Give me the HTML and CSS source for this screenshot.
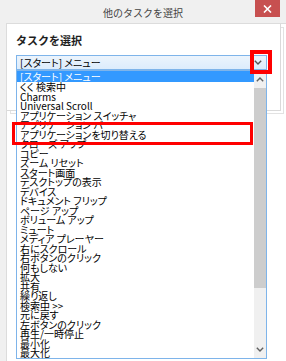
FILE: index.html
```
<!DOCTYPE html>
<html lang="ja">
<head>
    <meta charset="UTF-8">
    <title>他のタスクを選択</title>
    <link rel="stylesheet" href="styles.css">
</head>
<body>

<div class="dialog">
    <!-- Title bar -->
    <div class="titlebar">
        <span></span>
        <span class="title">他のタスクを選択</span>
        <button class="close-btn" aria-label="閉じる">
            <svg width="9" height="8" viewBox="0 0 9 8"><path d="M1 0.5 L8 7.5 M8 0.5 L1 7.5" stroke="#fff" stroke-width="1.6"/></svg>
        </button>
    </div>

    <div class="content">
        <!-- Main panel -->
        <div class="panel">
            <h1>タスクを選択</h1>
            <div class="select-box">
                <span class="select-value">[スタート] メニュー</span>
                <svg class="select-arrow" width="8" height="5" viewBox="0 0 8 5"><path d="M0.8 0.8 L4 4 L7.2 0.8" fill="none" stroke="#555" stroke-width="1.4"/></svg>
            </div>
        </div>
    </div>

    <!-- Opened dropdown -->
    <div class="dropdown">
        <ul class="options">
            <li class="selected">[スタート] メニュー</li>
            <li>くく 検索中</li>
            <li>Charms</li>
            <li>Universal Scroll</li>
            <li>アプリケーション スイッチャ</li>
            <li>アプリケーション バー</li>
            <li>アプリケーションを切り替える</li>
            <li>クローズ アップ</li>
            <li>コピー</li>
            <li>ズーム リセット</li>
            <li>スタート画面</li>
            <li>デスクトップの表示</li>
            <li>デバイス</li>
            <li>ドキュメント フリップ</li>
            <li>ページ アップ</li>
            <li>ボリューム アップ</li>
            <li>ミュート</li>
            <li>メディア プレーヤー</li>
            <li>右にスクロール</li>
            <li>右ボタンのクリック</li>
            <li>何もしない</li>
            <li>拡大</li>
            <li>共有</li>
            <li>繰り返し</li>
            <li>検索中 &gt;&gt;</li>
            <li>元に戻す</li>
            <li>左ボタンのクリック</li>
            <li>再生/一時停止</li>
            <li>最小化</li>
            <li>最大化</li>
        </ul>
        <div class="scrollbar">
            <svg class="scroll-arrow" width="8" height="5" viewBox="0 0 8 5"><path d="M0.8 4.2 L4 1 L7.2 4.2" fill="none" stroke="#606060" stroke-width="1.4"/></svg>
            <div class="scroll-thumb"></div>
            <div class="scroll-track"></div>
            <svg class="scroll-arrow" width="8" height="5" viewBox="0 0 8 5"><path d="M0.8 0.8 L4 4 L7.2 0.8" fill="none" stroke="#606060" stroke-width="1.4"/></svg>
        </div>
    </div>

    <!-- Highlight marks -->
    <div class="mark mark-item"></div>
    <div class="mark mark-arrow"></div>
</div>

</body>
</html>
```

FILE: styles.css
```
body {
    margin: 0;
    padding: 0;
    font-family: "Noto Sans CJK JP", sans-serif;
    background-color: #f0f0f0;
    color: #000;
}

.dialog {
    position: relative;
    width: 286px;
    height: 361px;
    overflow: hidden;
    background-color: #f0f0f0;
}

/* Title bar */
.titlebar {
    display: grid;
    grid-template-columns: 1fr auto 1fr;
    height: 23px;
}

.title {
    font-size: 10px;
    line-height: 12px;
    padding-top: 7px;
    color: #444;
}

.close-btn {
    justify-self: end;
    margin-right: 6px;
    width: 25px;
    height: 17px;
    padding: 0;
    border: none;
    background-color: #c75050;
    display: flex;
    justify-content: center;
    align-items: center;
}

/* White client area */
.content {
    margin-left: 6px;
    height: 338px;
    background-color: #fff;
    border-left: 1px solid #dcdcdc;
    border-top: 1px solid #dcdcdc;
}

/* Panel with etched frame */
.panel {
    box-sizing: border-box;
    width: 274px;
    height: 87px;
    border-right: 1px solid #dadada;
    border-bottom: 1px solid #dadada;
    box-shadow: 3px 3px 0 -1px #fff, 3px 3px 0 0 #e2e2e2;
    padding-left: 9px;
}

h1 {
    margin: 0;
    padding-top: 9px;
    font-size: 11px;
    line-height: 14px;
    font-weight: bold;
    color: #1e1e1e;
}

.select-box {
    margin-top: 8px;
    width: 249px;
    height: 13px;
    border: 1px solid #7eb4ea;
    background: linear-gradient(#ecf4fc, #dcecfc);
    display: flex;
    align-items: center;
    justify-content: space-between;
}

.select-value {
    padding-left: 3px;
    font-size: 10px;
    line-height: 13px;
    font-feature-settings: "palt";
}

.select-arrow {
    margin-right: 4px;
}

/* Dropdown list */
.dropdown {
    position: absolute;
    left: 16px;
    top: 70px;
    width: 249px;
    height: 287px;
    border: 1px solid #7eb4ea;
    background-color: #fff;
    display: flex;
}

.options {
    list-style: none;
    margin: 0;
    padding: 0;
    flex: 1;
}

.options li {
    height: 9.5px;
    padding-left: 3px;
    font-size: 10px;
    line-height: 9.5px;
    font-feature-settings: "palt";
    white-space: nowrap;
}

.options li.selected {
    height: 11px;
    line-height: 11px;
    background-color: #3399ff;
    color: #fff;
}

.scrollbar {
    width: 12px;
    background-color: #f0f0f0;
    display: flex;
    flex-direction: column;
    align-items: center;
}

.scroll-arrow {
    flex: none;
    margin: 6px 0;
}

.scroll-thumb {
    width: 12px;
    height: 200px;
    background-color: #cdcdcd;
}

.scroll-track {
    flex: 1;
}

/* Red highlight marks */
.mark {
    position: absolute;
    border: 3px solid #f00;
    box-sizing: border-box;
}

.mark-item {
    left: 12px;
    top: 122px;
    width: 241px;
    height: 23px;
}

.mark-arrow {
    left: 250px;
    top: 50px;
    width: 22px;
    height: 24px;
    border-width: 4px;
}
```
